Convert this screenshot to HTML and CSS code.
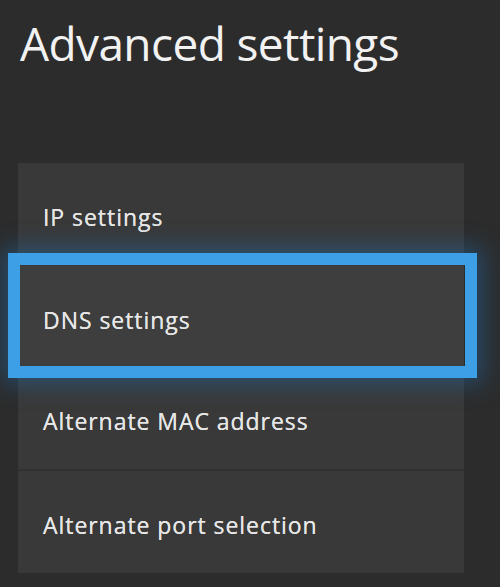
FILE: index.html
```html
<!DOCTYPE html>
<html lang="en">
<head>
<meta charset="utf-8">
<title>Advanced settings</title>
<link rel="stylesheet" href="styles.css">
</head>
<body>
<main class="page">
  <h1 class="title">Advanced settings</h1>
  <ul class="list">
    <li class="item item-a">IP settings</li>
    <li class="item item-b focused">DNS settings</li>
    <li class="item item-a sep">Alternate MAC address</li>
    <li class="item item-b">Alternate port selection</li>
  </ul>
</main>
</body>
</html>
```
FILE: styles.css
```css
html, body {
  margin: 0;
  padding: 0;
  background: #2c2c2c;
}
body {
  width: 500px;
  height: 587px;
  overflow: hidden;
  font-family: "Open Sans", "Noto Sans", sans-serif;
  color: #ececec;
}
.page {
  padding: 0 36px 0 18px;
}
.title {
  margin: 0;
  padding: 12px 0 0 2px;
  font-size: 46px;
  line-height: 62px;
  font-weight: 400;
  color: #f2f2f2;
  letter-spacing: -0.6px;
}
.list {
  list-style: none;
  margin: 89px 0 0 0;
  padding: 0;
  width: 446px;
  background: #393939;
}
.item {
  display: flex;
  align-items: center;
  box-sizing: border-box;
  padding: 5px 0 0 25px;
  font-size: 23px;
  font-weight: 500;
  color: #e6e6e6;
  letter-spacing: 0.95px;
  text-shadow: 0 0 0.6px #e6e6e6;
}
.item-a { height: 103px; }
.item-b { height: 102px; }
.sep { border-bottom: 2px solid #313131; }
.focused {
  position: relative;
  background: #3e3e3e;
  z-index: 1;
}
.focused::before {
  content: "";
  position: absolute;
  top: -13px;
  bottom: -10px;
  left: -10px;
  right: -13px;
  border: 12px solid #3d9fe6;
  box-shadow: 0 0 22px 6px rgba(30, 110, 180, 0.45);
  pointer-events: none;
}
```
